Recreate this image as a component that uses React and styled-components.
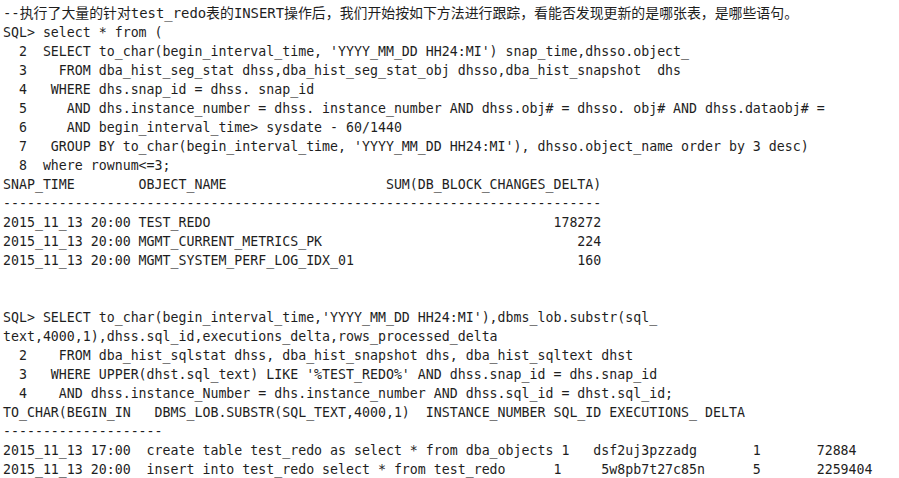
import React from 'react';
import styled, { createGlobalStyle } from 'styled-components';

const GlobalStyle = createGlobalStyle`
  html, body {
    margin: 0;
    padding: 0;
    background: #ffffff;
  }
`;

// SQL*Plus style column formatting
const segRow = (time, name, total) =>
  time.padEnd(17) + name.padEnd(31) + total.padStart(27);

const firstQuery = [
  "SQL> select * from (",
  "  2  SELECT to_char(begin_interval_time, 'YYYY_MM_DD HH24:MI') snap_time,dhsso.object_",
  "  3    FROM dba_hist_seg_stat dhss,dba_hist_seg_stat_obj dhsso,dba_hist_snapshot  dhs",
  "  4   WHERE dhs.snap_id = dhss. snap_id",
  "  5     AND dhs.instance_number = dhss. instance_number AND dhss.obj# = dhsso. obj# AND dhss.dataobj# =",
  "  6     AND begin_interval_time> sysdate - 60/1440",
  "  7   GROUP BY to_char(begin_interval_time, 'YYYY_MM_DD HH24:MI'), dhsso.object_name order by 3 desc)",
  "  8  where rownum<=3;",
  "SNAP_TIME".padEnd(17) + "OBJECT_NAME".padEnd(31) + "SUM(DB_BLOCK_CHANGES_DELTA)",
  "-".repeat(75),
  segRow("2015_11_13 20:00", "TEST_REDO", "178272"),
  segRow("2015_11_13 20:00", "MGMT_CURRENT_METRICS_PK", "224"),
  segRow("2015_11_13 20:00", "MGMT_SYSTEM_PERF_LOG_IDX_01", "160"),
];

const secondQuery = [
  "SQL> SELECT to_char(begin_interval_time,'YYYY_MM_DD HH24:MI'),dbms_lob.substr(sql_",
  "text,4000,1),dhss.sql_id,executions_delta,rows_processed_delta",
  "  2    FROM dba_hist_sqlstat dhss, dba_hist_snapshot dhs, dba_hist_sqltext dhst",
  "  3   WHERE UPPER(dhst.sql_text) LIKE '%TEST_REDO%' AND dhss.snap_id = dhs.snap_id",
  "  4    AND dhss.instance_Number = dhs.instance_number AND dhss.sql_id = dhst.sql_id;",
  "TO_CHAR(BEGIN_IN   DBMS_LOB.SUBSTR(SQL_TEXT,4000,1)  INSTANCE_NUMBER SQL_ID EXECUTIONS_ DELTA",
  "-".repeat(20),
  "2015_11_13 17:00  create table test_redo as select * from dba_objects 1   dsf2uj3pzzadg       1       72884",
  "2015_11_13 20:00  insert into test_redo select * from test_redo      1     5w8pb7t27c85n      5       2259404",
];

function App() {
  return (
    <>
      <GlobalStyle />
      <Page>
        <Note>--执行了大量的针对test_redo表的INSERT操作后，我们开始按如下方法进行跟踪，看能否发现更新的是哪张表，是哪些语句。</Note>
        <Console>{firstQuery.join('\n')}</Console>
        <Console>{secondQuery.join('\n')}</Console>
      </Page>
    </>
  );
}

export default App;

const Page = styled.div`
  display: flex;
  flex-direction: column;
  gap: 38px;
  padding: 4px 0 0 3px;
  width: 899px;
  height: 478px;
  box-sizing: border-box;
  overflow: hidden;
  color: #1e1e1e;
`;

const Note = styled.div`
  margin-bottom: -38px;
  font-family: "DejaVu Sans Mono", "Noto Sans CJK SC", monospace;
  font-size: 13.9px;
  line-height: 19px;
  white-space: pre;
`;

const Console = styled.pre`
  margin: 0;
  font-family: "DejaVu Sans Mono", "Liberation Mono", monospace;
  font-size: 13.25px;
  line-height: 19px;
  white-space: pre;
`;
